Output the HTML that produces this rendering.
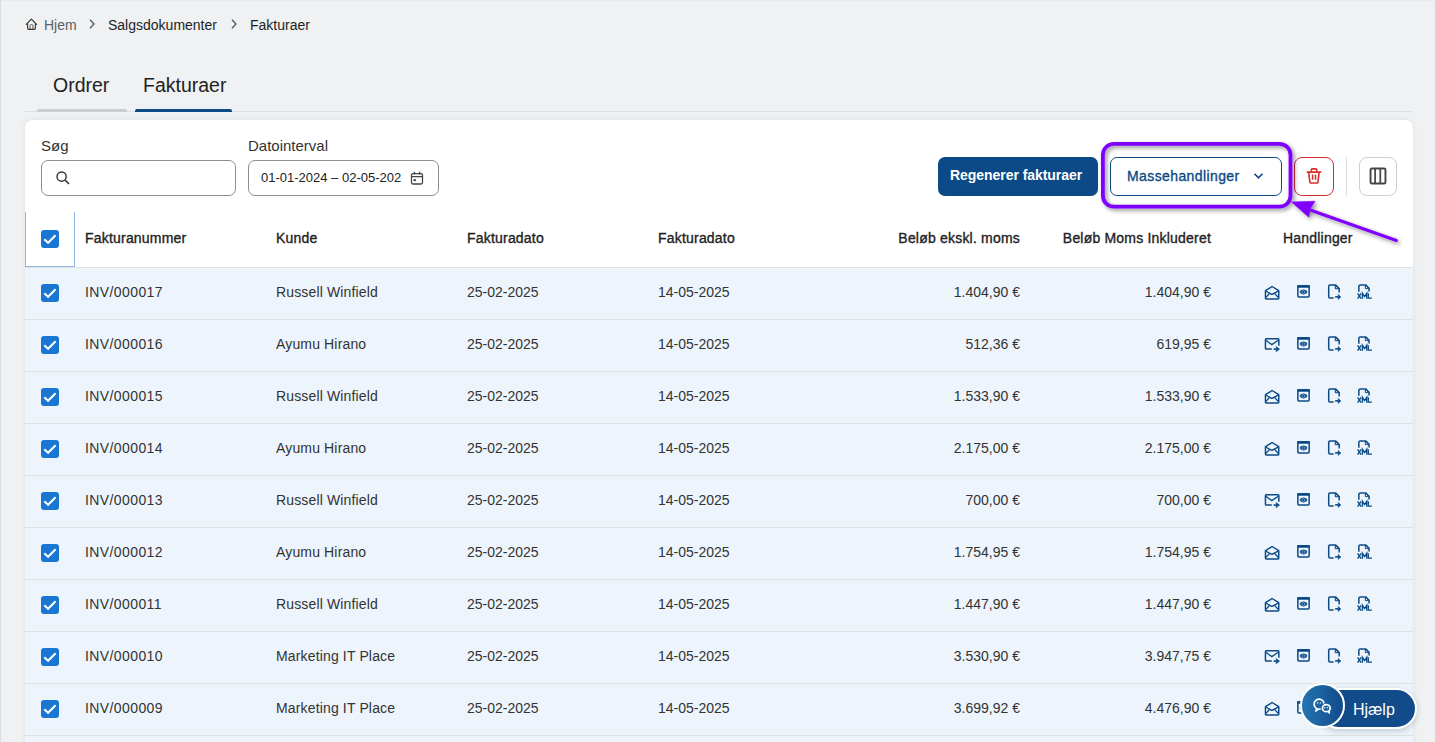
<!DOCTYPE html>
<html><head><meta charset="utf-8"><style>
*{box-sizing:border-box;margin:0;padding:0}
html,body{width:1435px;height:742px;overflow:hidden}
body{background:#f0f1f3;font-family:"Liberation Sans",sans-serif;color:#222;position:relative}
.a{position:absolute}
.t{position:absolute;font-size:14px;line-height:14px;white-space:nowrap;color:#333}
.r{text-align:right}
.h{position:absolute;font-size:14px;line-height:14px;white-space:nowrap;color:#222;-webkit-text-stroke:0.35px #222;letter-spacing:0.2px}
.b{font-weight:bold;-webkit-text-stroke:0}
.card{position:absolute;left:25px;top:120px;width:1388px;height:700px;background:#fff;border-radius:8px;box-shadow:0 0 6px rgba(0,0,0,0.07)}
.row{position:absolute;left:25px;width:1388px;height:52px;background:#edf4fc;border-bottom:1px solid #e0e0e0}
.cb{position:absolute;width:18px;height:18px;background:#1976d2;border-radius:3px}
.cb svg{position:absolute;left:0;top:0}
</style></head><body>
<div class="a" style="left:0;top:0;width:1435px;height:1px;background:#e9eaee"></div>
<div class="a" style="left:0;top:0;width:1px;height:742px;background:#d8dbdf"></div>
<!-- breadcrumb -->
<svg class="a" style="left:22px;top:14px" width="20" height="20" viewBox="0 0 20 20"><path d="M4.3 10.4 L9.4 5.1 L14.6 10.4" fill="none" stroke="#333" stroke-width="1.15" stroke-linecap="round" stroke-linejoin="round"/><path d="M5.6 9.3 V14.1 Q5.6 15.4 6.9 15.4 H12.1 Q13.4 15.4 13.4 14.1 V9.3" fill="none" stroke="#333" stroke-width="1.1"/><path d="M8.0 15.3 V11.8 Q8.0 10.5 9.5 10.5 Q11 10.5 11 11.8 V15.3" fill="none" stroke="#555" stroke-width="1.0"/></svg>
<div class="t" style="left:44px;top:18px;color:#5a5f66">Hjem</div>
<svg class="a" style="left:88px;top:18px" width="8" height="12" viewBox="0 0 8 12"><path d="M2 1.8 L6 6 L2 10.2" fill="none" stroke="#555" stroke-width="1.3"/></svg>
<div class="t" style="left:108px;top:18px;color:#1f1f1f">Salgsdokumenter</div>
<svg class="a" style="left:230px;top:18px" width="8" height="12" viewBox="0 0 8 12"><path d="M2 1.8 L6 6 L2 10.2" fill="none" stroke="#555" stroke-width="1.3"/></svg>
<div class="t" style="left:250px;top:18px;color:#1f1f1f">Fakturaer</div>
<!-- tabs -->
<div class="t" style="left:53px;top:75px;font-size:19.5px;line-height:20px;color:#222">Ordrer</div>
<div class="t" style="left:143px;top:75px;font-size:19.5px;line-height:20px;color:#222">Fakturaer</div>
<div class="a" style="left:25px;top:111px;width:1388px;height:1px;background:#dcdfe3"></div>
<div class="a" style="left:37px;top:109px;width:90px;height:3px;background:#c9ccd1;border-radius:2px 2px 0 0"></div>
<div class="a" style="left:135px;top:109px;width:97px;height:3px;background:#0b4a86;border-radius:2px 2px 0 0"></div>
<div class="card"></div>
<!-- filters -->
<div class="t" style="left:41px;top:138px;font-size:15px;line-height:15px;color:#333">Søg</div>
<div class="a" style="left:41px;top:160px;width:195px;height:36px;border:1px solid #8a8d91;border-radius:7px"></div>
<svg class="a" style="left:55px;top:170px" width="16" height="16" viewBox="0 0 16 16"><circle cx="6.6" cy="6.6" r="4.6" fill="none" stroke="#333" stroke-width="1.4"/><path d="M10 10 L14 14" stroke="#333" stroke-width="1.6"/></svg>
<div class="t" style="left:248px;top:138px;font-size:15px;line-height:15px;color:#333">Datointerval</div>
<div class="a" style="left:248px;top:160px;width:191px;height:36px;border:1px solid #8a8d91;border-radius:7px"></div>
<div class="t" style="left:261px;top:171px;font-size:13px;line-height:13px;color:#222">01-01-2024 – 02-05-202</div>
<svg class="a" style="left:410px;top:171px" width="14" height="14" viewBox="0 0 14 14"><rect x="1.5" y="2.6" width="11" height="10.4" rx="1.5" fill="none" stroke="#444" stroke-width="1.3"/><path d="M1.5 5.6 H12.5 M4.4 0.8 V3.6 M9.6 0.8 V3.6" stroke="#444" stroke-width="1.3"/><rect x="3.6" y="8" width="2.2" height="2.2" fill="#444"/></svg>
<!-- buttons -->
<div class="a" style="left:938px;top:157px;width:160px;height:39px;background:#0b4a86;border-radius:7px"></div>
<div class="h b" style="left:950px;top:168px;color:#fff;letter-spacing:-0.05px">Regenerer fakturaer</div>
<div class="a" style="left:1110px;top:157px;width:172px;height:39px;border:1px solid #0b4a86;border-radius:7px;background:#fff"></div>
<div class="t" style="left:1127px;top:169px;color:#0b4a86;-webkit-text-stroke:0.35px #0b4a86;letter-spacing:0.4px">Massehandlinger</div>
<svg class="a" style="left:1252px;top:170px" width="13" height="12" viewBox="0 0 13 12"><path d="M2.5 3.8 L6.5 7.8 L10.5 3.8" fill="none" stroke="#0b4a86" stroke-width="1.6"/></svg>
<div class="a" style="left:1294px;top:157px;width:40px;height:39px;border:1px solid #d32f2f;border-radius:8px"></div>
<svg class="a" style="left:1306px;top:167px" width="16" height="18" viewBox="0 0 16 18"><path d="M1.4 5.1 H14.6" stroke="#d32f2f" stroke-width="1.7" stroke-linecap="round"/><path d="M5.3 4.6 V2.8 Q5.3 1.9 6.2 1.9 H9.9 Q10.8 1.9 10.8 2.8 V4.6" fill="none" stroke="#d32f2f" stroke-width="1.6"/><path d="M2.7 5.6 L3.9 15.4 Q4 16.0 4.6 16.0 H11.2 Q11.8 16.0 11.9 15.4 L13.1 5.6" fill="none" stroke="#d32f2f" stroke-width="1.6" stroke-linejoin="round"/><path d="M6.6 7.6 V12.8 M9.5 7.6 V12.8" stroke="#d32f2f" stroke-width="1.5"/></svg>
<div class="a" style="left:1346px;top:157px;width:1px;height:39px;background:#dddddd"></div>
<div class="a" style="left:1359px;top:157px;width:38px;height:39px;border:1px solid #cfcfcf;border-radius:8px"></div>
<svg class="a" style="left:1369px;top:167px" width="18" height="18" viewBox="0 0 18 18"><rect x="1.55" y="1.55" width="14.9" height="14.9" rx="1.3" fill="none" stroke="#444" stroke-width="1.9"/><path d="M6.1 1.5 V16.5 M11.3 1.5 V16.5" stroke="#444" stroke-width="1.7"/></svg>
<!-- table header -->
<div class="a" style="left:25px;top:267px;width:1388px;height:1px;background:#e0e0e0"></div>
<div class="a" style="left:25px;top:212px;width:50px;height:55px;border:1px solid #90b8e8;border-top:none"></div>
<div class="cb" style="left:41px;top:230px"><svg width="18" height="18" viewBox="0 0 18 18"><path d="M3.3 9.3 L7.1 12.8 L14.6 5.3" fill="none" stroke="#fff" stroke-width="2.1"/></svg></div>
<div class="h" style="left:85px;top:231px">Fakturanummer</div>
<div class="h" style="left:276px;top:231px">Kunde</div>
<div class="h" style="left:467px;top:231px">Fakturadato</div>
<div class="h" style="left:658px;top:231px">Fakturadato</div>
<div class="h r" style="right:415px;top:231px">Beløb ekskl. moms</div>
<div class="h r" style="right:224px;top:231px">Beløb Moms Inkluderet</div>
<div class="h" style="left:1283px;top:231px">Handlinger</div>
<div class="row" style="top:268px"></div><div class="cb" style="left:41px;top:284px"><svg width="18" height="18" viewBox="0 0 18 18"><path d="M3.3 9.3 L7.1 12.8 L14.6 5.3" fill="none" stroke="#fff" stroke-width="2.1"/></svg></div><div class="t" style="left:85px;top:285px;letter-spacing:0.4px">INV/000017</div><div class="t" style="left:276px;top:285px;letter-spacing:0.15px">Russell Winfield</div><div class="t" style="left:467px;top:285px">25-02-2025</div><div class="t" style="left:658px;top:285px">14-05-2025</div><div class="t r" style="right:415px;top:285px">1.404,90 €</div><div class="t r" style="right:224px;top:285px">1.404,90 €</div><svg width="16" height="16" viewBox="0 0 16 16" style="position:absolute;left:1264px;top:284px"><path d="M1.45 6.6 L8.05 2.5 L14.75 6.6 V14.3 Q14.75 14.95 14.1 14.95 H2.1 Q1.45 14.95 1.45 14.3 Z" fill="none" stroke="#0b4a86" stroke-width="1.45" stroke-linejoin="round"/><path d="M2 7.2 L7.9 10.4 L14.2 7.2 M2.1 13.2 L5.4 9.6 M14.1 13.2 L10.8 9.6" fill="none" stroke="#0b4a86" stroke-width="1.3"/></svg><svg width="16" height="16" viewBox="0 0 16 16" style="position:absolute;left:1296px;top:284px"><rect x="1.85" y="1.75" width="11.3" height="11.3" rx="1.2" fill="none" stroke="#0b4a86" stroke-width="1.5"/><rect x="1.2" y="1.0" width="12.6" height="2.7" rx="0.8" fill="#0b4a86"/><path d="M3.7 8 C4.9 4.8 10.1 4.8 11.3 8 C10.1 11.2 4.9 11.2 3.7 8 Z" fill="#0b4a86"/><circle cx="7.45" cy="8.05" r="1.5" fill="none" stroke="#8fb0d2" stroke-width="0.8"/></svg><svg width="16" height="16" viewBox="0 0 16 16" style="position:absolute;left:1327px;top:284px"><path d="M6.6 14.05 H3.1 Q1.7 14.05 1.7 12.6 V2.3 Q1.7 0.9 3.1 0.9 H8.5 L12.2 4.5 V8.6" fill="none" stroke="#0b4a86" stroke-width="1.5" stroke-linejoin="round"/><path d="M8.2 1.3 V4.8 H11.9 Z" fill="#0b4a86" stroke="#0b4a86" stroke-width="0.8" stroke-linejoin="round"/><circle cx="9.4" cy="3.6" r="0.6" fill="#edf4fc"/><path d="M8.1 12.9 H12.2" fill="none" stroke="#0b4a86" stroke-width="1.6"/><path d="M11 10.4 L13.9 12.9 L11 15.4 L11.5 12.9 Z" fill="#0b4a86" stroke="#0b4a86" stroke-width="0.6" stroke-linejoin="round"/></svg><svg width="16" height="16" viewBox="0 0 16 16" style="position:absolute;left:1357px;top:284px"><path d="M1.85 7.7 V2.3 Q1.85 0.9 3.3 0.9 H8.6 L12.05 4.3 V7.5" fill="none" stroke="#0b4a86" stroke-width="1.5" stroke-linejoin="round"/><path d="M8.3 1.3 V4.6 H11.7 Z" fill="#0b4a86" stroke="#0b4a86" stroke-width="0.8" stroke-linejoin="round"/><circle cx="9.5" cy="3.4" r="0.6" fill="#edf4fc"/><path d="M0.6 9.3 L4.1 14.7 M4.1 9.3 L0.6 14.7" stroke="#0b4a86" stroke-width="1.35"/><path d="M5.4 14.8 V9.3 L7.6 12.6 L9.8 9.3 V14.8" fill="none" stroke="#0b4a86" stroke-width="1.35" stroke-linejoin="miter"/><path d="M11.3 9.2 V14.1 H14.9" fill="none" stroke="#0b4a86" stroke-width="1.35"/></svg><div class="row" style="top:320px"></div><div class="cb" style="left:41px;top:336px"><svg width="18" height="18" viewBox="0 0 18 18"><path d="M3.3 9.3 L7.1 12.8 L14.6 5.3" fill="none" stroke="#fff" stroke-width="2.1"/></svg></div><div class="t" style="left:85px;top:337px;letter-spacing:0.4px">INV/000016</div><div class="t" style="left:276px;top:337px;letter-spacing:0.15px">Ayumu Hirano</div><div class="t" style="left:467px;top:337px">25-02-2025</div><div class="t" style="left:658px;top:337px">14-05-2025</div><div class="t r" style="right:415px;top:337px">512,36 €</div><div class="t r" style="right:224px;top:337px">619,95 €</div><svg width="16" height="16" viewBox="0 0 16 16" style="position:absolute;left:1264px;top:336px"><path d="M7.8 13.05 H2.2 Q1.45 13.05 1.45 12.3 V3.55 Q1.45 2.8 2.2 2.8 H14.1 Q14.85 2.8 14.85 3.55 V9.8" fill="none" stroke="#0b4a86" stroke-width="1.5"/><path d="M1.9 4.3 L7.8 8.6 L14.3 4.3" fill="none" stroke="#0b4a86" stroke-width="1.3"/><path d="M9.6 13.1 H14" fill="none" stroke="#0b4a86" stroke-width="1.6"/><path d="M12 10.5 L15.6 13.1 L12 15.7 L12.6 13.1 Z" fill="#0b4a86" stroke="#0b4a86" stroke-width="0.6" stroke-linejoin="round"/></svg><svg width="16" height="16" viewBox="0 0 16 16" style="position:absolute;left:1296px;top:336px"><rect x="1.85" y="1.75" width="11.3" height="11.3" rx="1.2" fill="none" stroke="#0b4a86" stroke-width="1.5"/><rect x="1.2" y="1.0" width="12.6" height="2.7" rx="0.8" fill="#0b4a86"/><path d="M3.7 8 C4.9 4.8 10.1 4.8 11.3 8 C10.1 11.2 4.9 11.2 3.7 8 Z" fill="#0b4a86"/><circle cx="7.45" cy="8.05" r="1.5" fill="none" stroke="#8fb0d2" stroke-width="0.8"/></svg><svg width="16" height="16" viewBox="0 0 16 16" style="position:absolute;left:1327px;top:336px"><path d="M6.6 14.05 H3.1 Q1.7 14.05 1.7 12.6 V2.3 Q1.7 0.9 3.1 0.9 H8.5 L12.2 4.5 V8.6" fill="none" stroke="#0b4a86" stroke-width="1.5" stroke-linejoin="round"/><path d="M8.2 1.3 V4.8 H11.9 Z" fill="#0b4a86" stroke="#0b4a86" stroke-width="0.8" stroke-linejoin="round"/><circle cx="9.4" cy="3.6" r="0.6" fill="#edf4fc"/><path d="M8.1 12.9 H12.2" fill="none" stroke="#0b4a86" stroke-width="1.6"/><path d="M11 10.4 L13.9 12.9 L11 15.4 L11.5 12.9 Z" fill="#0b4a86" stroke="#0b4a86" stroke-width="0.6" stroke-linejoin="round"/></svg><svg width="16" height="16" viewBox="0 0 16 16" style="position:absolute;left:1357px;top:336px"><path d="M1.85 7.7 V2.3 Q1.85 0.9 3.3 0.9 H8.6 L12.05 4.3 V7.5" fill="none" stroke="#0b4a86" stroke-width="1.5" stroke-linejoin="round"/><path d="M8.3 1.3 V4.6 H11.7 Z" fill="#0b4a86" stroke="#0b4a86" stroke-width="0.8" stroke-linejoin="round"/><circle cx="9.5" cy="3.4" r="0.6" fill="#edf4fc"/><path d="M0.6 9.3 L4.1 14.7 M4.1 9.3 L0.6 14.7" stroke="#0b4a86" stroke-width="1.35"/><path d="M5.4 14.8 V9.3 L7.6 12.6 L9.8 9.3 V14.8" fill="none" stroke="#0b4a86" stroke-width="1.35" stroke-linejoin="miter"/><path d="M11.3 9.2 V14.1 H14.9" fill="none" stroke="#0b4a86" stroke-width="1.35"/></svg><div class="row" style="top:372px"></div><div class="cb" style="left:41px;top:388px"><svg width="18" height="18" viewBox="0 0 18 18"><path d="M3.3 9.3 L7.1 12.8 L14.6 5.3" fill="none" stroke="#fff" stroke-width="2.1"/></svg></div><div class="t" style="left:85px;top:389px;letter-spacing:0.4px">INV/000015</div><div class="t" style="left:276px;top:389px;letter-spacing:0.15px">Russell Winfield</div><div class="t" style="left:467px;top:389px">25-02-2025</div><div class="t" style="left:658px;top:389px">14-05-2025</div><div class="t r" style="right:415px;top:389px">1.533,90 €</div><div class="t r" style="right:224px;top:389px">1.533,90 €</div><svg width="16" height="16" viewBox="0 0 16 16" style="position:absolute;left:1264px;top:388px"><path d="M1.45 6.6 L8.05 2.5 L14.75 6.6 V14.3 Q14.75 14.95 14.1 14.95 H2.1 Q1.45 14.95 1.45 14.3 Z" fill="none" stroke="#0b4a86" stroke-width="1.45" stroke-linejoin="round"/><path d="M2 7.2 L7.9 10.4 L14.2 7.2 M2.1 13.2 L5.4 9.6 M14.1 13.2 L10.8 9.6" fill="none" stroke="#0b4a86" stroke-width="1.3"/></svg><svg width="16" height="16" viewBox="0 0 16 16" style="position:absolute;left:1296px;top:388px"><rect x="1.85" y="1.75" width="11.3" height="11.3" rx="1.2" fill="none" stroke="#0b4a86" stroke-width="1.5"/><rect x="1.2" y="1.0" width="12.6" height="2.7" rx="0.8" fill="#0b4a86"/><path d="M3.7 8 C4.9 4.8 10.1 4.8 11.3 8 C10.1 11.2 4.9 11.2 3.7 8 Z" fill="#0b4a86"/><circle cx="7.45" cy="8.05" r="1.5" fill="none" stroke="#8fb0d2" stroke-width="0.8"/></svg><svg width="16" height="16" viewBox="0 0 16 16" style="position:absolute;left:1327px;top:388px"><path d="M6.6 14.05 H3.1 Q1.7 14.05 1.7 12.6 V2.3 Q1.7 0.9 3.1 0.9 H8.5 L12.2 4.5 V8.6" fill="none" stroke="#0b4a86" stroke-width="1.5" stroke-linejoin="round"/><path d="M8.2 1.3 V4.8 H11.9 Z" fill="#0b4a86" stroke="#0b4a86" stroke-width="0.8" stroke-linejoin="round"/><circle cx="9.4" cy="3.6" r="0.6" fill="#edf4fc"/><path d="M8.1 12.9 H12.2" fill="none" stroke="#0b4a86" stroke-width="1.6"/><path d="M11 10.4 L13.9 12.9 L11 15.4 L11.5 12.9 Z" fill="#0b4a86" stroke="#0b4a86" stroke-width="0.6" stroke-linejoin="round"/></svg><svg width="16" height="16" viewBox="0 0 16 16" style="position:absolute;left:1357px;top:388px"><path d="M1.85 7.7 V2.3 Q1.85 0.9 3.3 0.9 H8.6 L12.05 4.3 V7.5" fill="none" stroke="#0b4a86" stroke-width="1.5" stroke-linejoin="round"/><path d="M8.3 1.3 V4.6 H11.7 Z" fill="#0b4a86" stroke="#0b4a86" stroke-width="0.8" stroke-linejoin="round"/><circle cx="9.5" cy="3.4" r="0.6" fill="#edf4fc"/><path d="M0.6 9.3 L4.1 14.7 M4.1 9.3 L0.6 14.7" stroke="#0b4a86" stroke-width="1.35"/><path d="M5.4 14.8 V9.3 L7.6 12.6 L9.8 9.3 V14.8" fill="none" stroke="#0b4a86" stroke-width="1.35" stroke-linejoin="miter"/><path d="M11.3 9.2 V14.1 H14.9" fill="none" stroke="#0b4a86" stroke-width="1.35"/></svg><div class="row" style="top:424px"></div><div class="cb" style="left:41px;top:440px"><svg width="18" height="18" viewBox="0 0 18 18"><path d="M3.3 9.3 L7.1 12.8 L14.6 5.3" fill="none" stroke="#fff" stroke-width="2.1"/></svg></div><div class="t" style="left:85px;top:441px;letter-spacing:0.4px">INV/000014</div><div class="t" style="left:276px;top:441px;letter-spacing:0.15px">Ayumu Hirano</div><div class="t" style="left:467px;top:441px">25-02-2025</div><div class="t" style="left:658px;top:441px">14-05-2025</div><div class="t r" style="right:415px;top:441px">2.175,00 €</div><div class="t r" style="right:224px;top:441px">2.175,00 €</div><svg width="16" height="16" viewBox="0 0 16 16" style="position:absolute;left:1264px;top:440px"><path d="M1.45 6.6 L8.05 2.5 L14.75 6.6 V14.3 Q14.75 14.95 14.1 14.95 H2.1 Q1.45 14.95 1.45 14.3 Z" fill="none" stroke="#0b4a86" stroke-width="1.45" stroke-linejoin="round"/><path d="M2 7.2 L7.9 10.4 L14.2 7.2 M2.1 13.2 L5.4 9.6 M14.1 13.2 L10.8 9.6" fill="none" stroke="#0b4a86" stroke-width="1.3"/></svg><svg width="16" height="16" viewBox="0 0 16 16" style="position:absolute;left:1296px;top:440px"><rect x="1.85" y="1.75" width="11.3" height="11.3" rx="1.2" fill="none" stroke="#0b4a86" stroke-width="1.5"/><rect x="1.2" y="1.0" width="12.6" height="2.7" rx="0.8" fill="#0b4a86"/><path d="M3.7 8 C4.9 4.8 10.1 4.8 11.3 8 C10.1 11.2 4.9 11.2 3.7 8 Z" fill="#0b4a86"/><circle cx="7.45" cy="8.05" r="1.5" fill="none" stroke="#8fb0d2" stroke-width="0.8"/></svg><svg width="16" height="16" viewBox="0 0 16 16" style="position:absolute;left:1327px;top:440px"><path d="M6.6 14.05 H3.1 Q1.7 14.05 1.7 12.6 V2.3 Q1.7 0.9 3.1 0.9 H8.5 L12.2 4.5 V8.6" fill="none" stroke="#0b4a86" stroke-width="1.5" stroke-linejoin="round"/><path d="M8.2 1.3 V4.8 H11.9 Z" fill="#0b4a86" stroke="#0b4a86" stroke-width="0.8" stroke-linejoin="round"/><circle cx="9.4" cy="3.6" r="0.6" fill="#edf4fc"/><path d="M8.1 12.9 H12.2" fill="none" stroke="#0b4a86" stroke-width="1.6"/><path d="M11 10.4 L13.9 12.9 L11 15.4 L11.5 12.9 Z" fill="#0b4a86" stroke="#0b4a86" stroke-width="0.6" stroke-linejoin="round"/></svg><svg width="16" height="16" viewBox="0 0 16 16" style="position:absolute;left:1357px;top:440px"><path d="M1.85 7.7 V2.3 Q1.85 0.9 3.3 0.9 H8.6 L12.05 4.3 V7.5" fill="none" stroke="#0b4a86" stroke-width="1.5" stroke-linejoin="round"/><path d="M8.3 1.3 V4.6 H11.7 Z" fill="#0b4a86" stroke="#0b4a86" stroke-width="0.8" stroke-linejoin="round"/><circle cx="9.5" cy="3.4" r="0.6" fill="#edf4fc"/><path d="M0.6 9.3 L4.1 14.7 M4.1 9.3 L0.6 14.7" stroke="#0b4a86" stroke-width="1.35"/><path d="M5.4 14.8 V9.3 L7.6 12.6 L9.8 9.3 V14.8" fill="none" stroke="#0b4a86" stroke-width="1.35" stroke-linejoin="miter"/><path d="M11.3 9.2 V14.1 H14.9" fill="none" stroke="#0b4a86" stroke-width="1.35"/></svg><div class="row" style="top:476px"></div><div class="cb" style="left:41px;top:492px"><svg width="18" height="18" viewBox="0 0 18 18"><path d="M3.3 9.3 L7.1 12.8 L14.6 5.3" fill="none" stroke="#fff" stroke-width="2.1"/></svg></div><div class="t" style="left:85px;top:493px;letter-spacing:0.4px">INV/000013</div><div class="t" style="left:276px;top:493px;letter-spacing:0.15px">Russell Winfield</div><div class="t" style="left:467px;top:493px">25-02-2025</div><div class="t" style="left:658px;top:493px">14-05-2025</div><div class="t r" style="right:415px;top:493px">700,00 €</div><div class="t r" style="right:224px;top:493px">700,00 €</div><svg width="16" height="16" viewBox="0 0 16 16" style="position:absolute;left:1264px;top:492px"><path d="M7.8 13.05 H2.2 Q1.45 13.05 1.45 12.3 V3.55 Q1.45 2.8 2.2 2.8 H14.1 Q14.85 2.8 14.85 3.55 V9.8" fill="none" stroke="#0b4a86" stroke-width="1.5"/><path d="M1.9 4.3 L7.8 8.6 L14.3 4.3" fill="none" stroke="#0b4a86" stroke-width="1.3"/><path d="M9.6 13.1 H14" fill="none" stroke="#0b4a86" stroke-width="1.6"/><path d="M12 10.5 L15.6 13.1 L12 15.7 L12.6 13.1 Z" fill="#0b4a86" stroke="#0b4a86" stroke-width="0.6" stroke-linejoin="round"/></svg><svg width="16" height="16" viewBox="0 0 16 16" style="position:absolute;left:1296px;top:492px"><rect x="1.85" y="1.75" width="11.3" height="11.3" rx="1.2" fill="none" stroke="#0b4a86" stroke-width="1.5"/><rect x="1.2" y="1.0" width="12.6" height="2.7" rx="0.8" fill="#0b4a86"/><path d="M3.7 8 C4.9 4.8 10.1 4.8 11.3 8 C10.1 11.2 4.9 11.2 3.7 8 Z" fill="#0b4a86"/><circle cx="7.45" cy="8.05" r="1.5" fill="none" stroke="#8fb0d2" stroke-width="0.8"/></svg><svg width="16" height="16" viewBox="0 0 16 16" style="position:absolute;left:1327px;top:492px"><path d="M6.6 14.05 H3.1 Q1.7 14.05 1.7 12.6 V2.3 Q1.7 0.9 3.1 0.9 H8.5 L12.2 4.5 V8.6" fill="none" stroke="#0b4a86" stroke-width="1.5" stroke-linejoin="round"/><path d="M8.2 1.3 V4.8 H11.9 Z" fill="#0b4a86" stroke="#0b4a86" stroke-width="0.8" stroke-linejoin="round"/><circle cx="9.4" cy="3.6" r="0.6" fill="#edf4fc"/><path d="M8.1 12.9 H12.2" fill="none" stroke="#0b4a86" stroke-width="1.6"/><path d="M11 10.4 L13.9 12.9 L11 15.4 L11.5 12.9 Z" fill="#0b4a86" stroke="#0b4a86" stroke-width="0.6" stroke-linejoin="round"/></svg><svg width="16" height="16" viewBox="0 0 16 16" style="position:absolute;left:1357px;top:492px"><path d="M1.85 7.7 V2.3 Q1.85 0.9 3.3 0.9 H8.6 L12.05 4.3 V7.5" fill="none" stroke="#0b4a86" stroke-width="1.5" stroke-linejoin="round"/><path d="M8.3 1.3 V4.6 H11.7 Z" fill="#0b4a86" stroke="#0b4a86" stroke-width="0.8" stroke-linejoin="round"/><circle cx="9.5" cy="3.4" r="0.6" fill="#edf4fc"/><path d="M0.6 9.3 L4.1 14.7 M4.1 9.3 L0.6 14.7" stroke="#0b4a86" stroke-width="1.35"/><path d="M5.4 14.8 V9.3 L7.6 12.6 L9.8 9.3 V14.8" fill="none" stroke="#0b4a86" stroke-width="1.35" stroke-linejoin="miter"/><path d="M11.3 9.2 V14.1 H14.9" fill="none" stroke="#0b4a86" stroke-width="1.35"/></svg><div class="row" style="top:528px"></div><div class="cb" style="left:41px;top:544px"><svg width="18" height="18" viewBox="0 0 18 18"><path d="M3.3 9.3 L7.1 12.8 L14.6 5.3" fill="none" stroke="#fff" stroke-width="2.1"/></svg></div><div class="t" style="left:85px;top:545px;letter-spacing:0.4px">INV/000012</div><div class="t" style="left:276px;top:545px;letter-spacing:0.15px">Ayumu Hirano</div><div class="t" style="left:467px;top:545px">25-02-2025</div><div class="t" style="left:658px;top:545px">14-05-2025</div><div class="t r" style="right:415px;top:545px">1.754,95 €</div><div class="t r" style="right:224px;top:545px">1.754,95 €</div><svg width="16" height="16" viewBox="0 0 16 16" style="position:absolute;left:1264px;top:544px"><path d="M1.45 6.6 L8.05 2.5 L14.75 6.6 V14.3 Q14.75 14.95 14.1 14.95 H2.1 Q1.45 14.95 1.45 14.3 Z" fill="none" stroke="#0b4a86" stroke-width="1.45" stroke-linejoin="round"/><path d="M2 7.2 L7.9 10.4 L14.2 7.2 M2.1 13.2 L5.4 9.6 M14.1 13.2 L10.8 9.6" fill="none" stroke="#0b4a86" stroke-width="1.3"/></svg><svg width="16" height="16" viewBox="0 0 16 16" style="position:absolute;left:1296px;top:544px"><rect x="1.85" y="1.75" width="11.3" height="11.3" rx="1.2" fill="none" stroke="#0b4a86" stroke-width="1.5"/><rect x="1.2" y="1.0" width="12.6" height="2.7" rx="0.8" fill="#0b4a86"/><path d="M3.7 8 C4.9 4.8 10.1 4.8 11.3 8 C10.1 11.2 4.9 11.2 3.7 8 Z" fill="#0b4a86"/><circle cx="7.45" cy="8.05" r="1.5" fill="none" stroke="#8fb0d2" stroke-width="0.8"/></svg><svg width="16" height="16" viewBox="0 0 16 16" style="position:absolute;left:1327px;top:544px"><path d="M6.6 14.05 H3.1 Q1.7 14.05 1.7 12.6 V2.3 Q1.7 0.9 3.1 0.9 H8.5 L12.2 4.5 V8.6" fill="none" stroke="#0b4a86" stroke-width="1.5" stroke-linejoin="round"/><path d="M8.2 1.3 V4.8 H11.9 Z" fill="#0b4a86" stroke="#0b4a86" stroke-width="0.8" stroke-linejoin="round"/><circle cx="9.4" cy="3.6" r="0.6" fill="#edf4fc"/><path d="M8.1 12.9 H12.2" fill="none" stroke="#0b4a86" stroke-width="1.6"/><path d="M11 10.4 L13.9 12.9 L11 15.4 L11.5 12.9 Z" fill="#0b4a86" stroke="#0b4a86" stroke-width="0.6" stroke-linejoin="round"/></svg><svg width="16" height="16" viewBox="0 0 16 16" style="position:absolute;left:1357px;top:544px"><path d="M1.85 7.7 V2.3 Q1.85 0.9 3.3 0.9 H8.6 L12.05 4.3 V7.5" fill="none" stroke="#0b4a86" stroke-width="1.5" stroke-linejoin="round"/><path d="M8.3 1.3 V4.6 H11.7 Z" fill="#0b4a86" stroke="#0b4a86" stroke-width="0.8" stroke-linejoin="round"/><circle cx="9.5" cy="3.4" r="0.6" fill="#edf4fc"/><path d="M0.6 9.3 L4.1 14.7 M4.1 9.3 L0.6 14.7" stroke="#0b4a86" stroke-width="1.35"/><path d="M5.4 14.8 V9.3 L7.6 12.6 L9.8 9.3 V14.8" fill="none" stroke="#0b4a86" stroke-width="1.35" stroke-linejoin="miter"/><path d="M11.3 9.2 V14.1 H14.9" fill="none" stroke="#0b4a86" stroke-width="1.35"/></svg><div class="row" style="top:580px"></div><div class="cb" style="left:41px;top:596px"><svg width="18" height="18" viewBox="0 0 18 18"><path d="M3.3 9.3 L7.1 12.8 L14.6 5.3" fill="none" stroke="#fff" stroke-width="2.1"/></svg></div><div class="t" style="left:85px;top:597px;letter-spacing:0.4px">INV/000011</div><div class="t" style="left:276px;top:597px;letter-spacing:0.15px">Russell Winfield</div><div class="t" style="left:467px;top:597px">25-02-2025</div><div class="t" style="left:658px;top:597px">14-05-2025</div><div class="t r" style="right:415px;top:597px">1.447,90 €</div><div class="t r" style="right:224px;top:597px">1.447,90 €</div><svg width="16" height="16" viewBox="0 0 16 16" style="position:absolute;left:1264px;top:596px"><path d="M1.45 6.6 L8.05 2.5 L14.75 6.6 V14.3 Q14.75 14.95 14.1 14.95 H2.1 Q1.45 14.95 1.45 14.3 Z" fill="none" stroke="#0b4a86" stroke-width="1.45" stroke-linejoin="round"/><path d="M2 7.2 L7.9 10.4 L14.2 7.2 M2.1 13.2 L5.4 9.6 M14.1 13.2 L10.8 9.6" fill="none" stroke="#0b4a86" stroke-width="1.3"/></svg><svg width="16" height="16" viewBox="0 0 16 16" style="position:absolute;left:1296px;top:596px"><rect x="1.85" y="1.75" width="11.3" height="11.3" rx="1.2" fill="none" stroke="#0b4a86" stroke-width="1.5"/><rect x="1.2" y="1.0" width="12.6" height="2.7" rx="0.8" fill="#0b4a86"/><path d="M3.7 8 C4.9 4.8 10.1 4.8 11.3 8 C10.1 11.2 4.9 11.2 3.7 8 Z" fill="#0b4a86"/><circle cx="7.45" cy="8.05" r="1.5" fill="none" stroke="#8fb0d2" stroke-width="0.8"/></svg><svg width="16" height="16" viewBox="0 0 16 16" style="position:absolute;left:1327px;top:596px"><path d="M6.6 14.05 H3.1 Q1.7 14.05 1.7 12.6 V2.3 Q1.7 0.9 3.1 0.9 H8.5 L12.2 4.5 V8.6" fill="none" stroke="#0b4a86" stroke-width="1.5" stroke-linejoin="round"/><path d="M8.2 1.3 V4.8 H11.9 Z" fill="#0b4a86" stroke="#0b4a86" stroke-width="0.8" stroke-linejoin="round"/><circle cx="9.4" cy="3.6" r="0.6" fill="#edf4fc"/><path d="M8.1 12.9 H12.2" fill="none" stroke="#0b4a86" stroke-width="1.6"/><path d="M11 10.4 L13.9 12.9 L11 15.4 L11.5 12.9 Z" fill="#0b4a86" stroke="#0b4a86" stroke-width="0.6" stroke-linejoin="round"/></svg><svg width="16" height="16" viewBox="0 0 16 16" style="position:absolute;left:1357px;top:596px"><path d="M1.85 7.7 V2.3 Q1.85 0.9 3.3 0.9 H8.6 L12.05 4.3 V7.5" fill="none" stroke="#0b4a86" stroke-width="1.5" stroke-linejoin="round"/><path d="M8.3 1.3 V4.6 H11.7 Z" fill="#0b4a86" stroke="#0b4a86" stroke-width="0.8" stroke-linejoin="round"/><circle cx="9.5" cy="3.4" r="0.6" fill="#edf4fc"/><path d="M0.6 9.3 L4.1 14.7 M4.1 9.3 L0.6 14.7" stroke="#0b4a86" stroke-width="1.35"/><path d="M5.4 14.8 V9.3 L7.6 12.6 L9.8 9.3 V14.8" fill="none" stroke="#0b4a86" stroke-width="1.35" stroke-linejoin="miter"/><path d="M11.3 9.2 V14.1 H14.9" fill="none" stroke="#0b4a86" stroke-width="1.35"/></svg><div class="row" style="top:632px"></div><div class="cb" style="left:41px;top:648px"><svg width="18" height="18" viewBox="0 0 18 18"><path d="M3.3 9.3 L7.1 12.8 L14.6 5.3" fill="none" stroke="#fff" stroke-width="2.1"/></svg></div><div class="t" style="left:85px;top:649px;letter-spacing:0.4px">INV/000010</div><div class="t" style="left:276px;top:649px;letter-spacing:0.15px">Marketing IT Place</div><div class="t" style="left:467px;top:649px">25-02-2025</div><div class="t" style="left:658px;top:649px">14-05-2025</div><div class="t r" style="right:415px;top:649px">3.530,90 €</div><div class="t r" style="right:224px;top:649px">3.947,75 €</div><svg width="16" height="16" viewBox="0 0 16 16" style="position:absolute;left:1264px;top:648px"><path d="M7.8 13.05 H2.2 Q1.45 13.05 1.45 12.3 V3.55 Q1.45 2.8 2.2 2.8 H14.1 Q14.85 2.8 14.85 3.55 V9.8" fill="none" stroke="#0b4a86" stroke-width="1.5"/><path d="M1.9 4.3 L7.8 8.6 L14.3 4.3" fill="none" stroke="#0b4a86" stroke-width="1.3"/><path d="M9.6 13.1 H14" fill="none" stroke="#0b4a86" stroke-width="1.6"/><path d="M12 10.5 L15.6 13.1 L12 15.7 L12.6 13.1 Z" fill="#0b4a86" stroke="#0b4a86" stroke-width="0.6" stroke-linejoin="round"/></svg><svg width="16" height="16" viewBox="0 0 16 16" style="position:absolute;left:1296px;top:648px"><rect x="1.85" y="1.75" width="11.3" height="11.3" rx="1.2" fill="none" stroke="#0b4a86" stroke-width="1.5"/><rect x="1.2" y="1.0" width="12.6" height="2.7" rx="0.8" fill="#0b4a86"/><path d="M3.7 8 C4.9 4.8 10.1 4.8 11.3 8 C10.1 11.2 4.9 11.2 3.7 8 Z" fill="#0b4a86"/><circle cx="7.45" cy="8.05" r="1.5" fill="none" stroke="#8fb0d2" stroke-width="0.8"/></svg><svg width="16" height="16" viewBox="0 0 16 16" style="position:absolute;left:1327px;top:648px"><path d="M6.6 14.05 H3.1 Q1.7 14.05 1.7 12.6 V2.3 Q1.7 0.9 3.1 0.9 H8.5 L12.2 4.5 V8.6" fill="none" stroke="#0b4a86" stroke-width="1.5" stroke-linejoin="round"/><path d="M8.2 1.3 V4.8 H11.9 Z" fill="#0b4a86" stroke="#0b4a86" stroke-width="0.8" stroke-linejoin="round"/><circle cx="9.4" cy="3.6" r="0.6" fill="#edf4fc"/><path d="M8.1 12.9 H12.2" fill="none" stroke="#0b4a86" stroke-width="1.6"/><path d="M11 10.4 L13.9 12.9 L11 15.4 L11.5 12.9 Z" fill="#0b4a86" stroke="#0b4a86" stroke-width="0.6" stroke-linejoin="round"/></svg><svg width="16" height="16" viewBox="0 0 16 16" style="position:absolute;left:1357px;top:648px"><path d="M1.85 7.7 V2.3 Q1.85 0.9 3.3 0.9 H8.6 L12.05 4.3 V7.5" fill="none" stroke="#0b4a86" stroke-width="1.5" stroke-linejoin="round"/><path d="M8.3 1.3 V4.6 H11.7 Z" fill="#0b4a86" stroke="#0b4a86" stroke-width="0.8" stroke-linejoin="round"/><circle cx="9.5" cy="3.4" r="0.6" fill="#edf4fc"/><path d="M0.6 9.3 L4.1 14.7 M4.1 9.3 L0.6 14.7" stroke="#0b4a86" stroke-width="1.35"/><path d="M5.4 14.8 V9.3 L7.6 12.6 L9.8 9.3 V14.8" fill="none" stroke="#0b4a86" stroke-width="1.35" stroke-linejoin="miter"/><path d="M11.3 9.2 V14.1 H14.9" fill="none" stroke="#0b4a86" stroke-width="1.35"/></svg><div class="row" style="top:684px"></div><div class="cb" style="left:41px;top:700px"><svg width="18" height="18" viewBox="0 0 18 18"><path d="M3.3 9.3 L7.1 12.8 L14.6 5.3" fill="none" stroke="#fff" stroke-width="2.1"/></svg></div><div class="t" style="left:85px;top:701px;letter-spacing:0.4px">INV/000009</div><div class="t" style="left:276px;top:701px;letter-spacing:0.15px">Marketing IT Place</div><div class="t" style="left:467px;top:701px">25-02-2025</div><div class="t" style="left:658px;top:701px">14-05-2025</div><div class="t r" style="right:415px;top:701px">3.699,92 €</div><div class="t r" style="right:224px;top:701px">4.476,90 €</div><svg width="16" height="16" viewBox="0 0 16 16" style="position:absolute;left:1264px;top:700px"><path d="M1.45 6.6 L8.05 2.5 L14.75 6.6 V14.3 Q14.75 14.95 14.1 14.95 H2.1 Q1.45 14.95 1.45 14.3 Z" fill="none" stroke="#0b4a86" stroke-width="1.45" stroke-linejoin="round"/><path d="M2 7.2 L7.9 10.4 L14.2 7.2 M2.1 13.2 L5.4 9.6 M14.1 13.2 L10.8 9.6" fill="none" stroke="#0b4a86" stroke-width="1.3"/></svg><svg width="16" height="16" viewBox="0 0 16 16" style="position:absolute;left:1296px;top:700px"><rect x="1.85" y="1.75" width="11.3" height="11.3" rx="1.2" fill="none" stroke="#0b4a86" stroke-width="1.5"/><rect x="1.2" y="1.0" width="12.6" height="2.7" rx="0.8" fill="#0b4a86"/><path d="M3.7 8 C4.9 4.8 10.1 4.8 11.3 8 C10.1 11.2 4.9 11.2 3.7 8 Z" fill="#0b4a86"/><circle cx="7.45" cy="8.05" r="1.5" fill="none" stroke="#8fb0d2" stroke-width="0.8"/></svg><svg width="16" height="16" viewBox="0 0 16 16" style="position:absolute;left:1327px;top:700px"><path d="M6.6 14.05 H3.1 Q1.7 14.05 1.7 12.6 V2.3 Q1.7 0.9 3.1 0.9 H8.5 L12.2 4.5 V8.6" fill="none" stroke="#0b4a86" stroke-width="1.5" stroke-linejoin="round"/><path d="M8.2 1.3 V4.8 H11.9 Z" fill="#0b4a86" stroke="#0b4a86" stroke-width="0.8" stroke-linejoin="round"/><circle cx="9.4" cy="3.6" r="0.6" fill="#edf4fc"/><path d="M8.1 12.9 H12.2" fill="none" stroke="#0b4a86" stroke-width="1.6"/><path d="M11 10.4 L13.9 12.9 L11 15.4 L11.5 12.9 Z" fill="#0b4a86" stroke="#0b4a86" stroke-width="0.6" stroke-linejoin="round"/></svg><svg width="16" height="16" viewBox="0 0 16 16" style="position:absolute;left:1357px;top:700px"><path d="M1.85 7.7 V2.3 Q1.85 0.9 3.3 0.9 H8.6 L12.05 4.3 V7.5" fill="none" stroke="#0b4a86" stroke-width="1.5" stroke-linejoin="round"/><path d="M8.3 1.3 V4.6 H11.7 Z" fill="#0b4a86" stroke="#0b4a86" stroke-width="0.8" stroke-linejoin="round"/><circle cx="9.5" cy="3.4" r="0.6" fill="#edf4fc"/><path d="M0.6 9.3 L4.1 14.7 M4.1 9.3 L0.6 14.7" stroke="#0b4a86" stroke-width="1.35"/><path d="M5.4 14.8 V9.3 L7.6 12.6 L9.8 9.3 V14.8" fill="none" stroke="#0b4a86" stroke-width="1.35" stroke-linejoin="miter"/><path d="M11.3 9.2 V14.1 H14.9" fill="none" stroke="#0b4a86" stroke-width="1.35"/></svg><div class="row" style="top:736px"></div>
<!-- annotation -->
<svg class="a" style="left:0;top:0;overflow:visible" width="1435" height="742">
<defs><filter id="sh" x="-20%" y="-20%" width="140%" height="140%"><feDropShadow dx="2" dy="2" stdDeviation="2" flood-color="#000" flood-opacity="0.45"/></filter></defs>
<g filter="url(#sh)">
<rect x="1102.9" y="143.8" width="187.6" height="62.9" rx="11" fill="none" stroke="#7f00ff" stroke-width="3.8"/>
<path d="M1396.4 240.5 L1306 208.5" stroke="#7f00ff" stroke-width="3" stroke-linecap="round"/>
<path d="M1291.5 202 L1315 201.3 L1309.8 209.2 L1309 217.2 Z" fill="#7f00ff" stroke="#7f00ff" stroke-width="0.6" stroke-linejoin="round"/>
</g>
</svg>
<!-- help button -->
<div class="a" style="left:1318px;top:688px;width:99px;height:41px;background:#124b8a;border:2px solid #fff;border-radius:21px;box-shadow:0 2px 6px rgba(0,0,0,0.18)"></div>
<div class="a" style="left:1299.5px;top:682.5px;width:45px;height:45px;border-radius:50%;border:2px solid #fff;background:linear-gradient(90deg,#2474b2,#124b8a)"></div>
<svg class="a" style="left:1310px;top:695px" width="24" height="22" viewBox="0 0 24 22"><path d="M6.2 14.0 L5.4 16.6 L8.8 14.6" fill="#fff" stroke="#fff" stroke-width="1" stroke-linejoin="round"/><circle cx="9.1" cy="9.2" r="5.0" fill="none" stroke="#fff" stroke-width="1.7"/><ellipse cx="16.3" cy="13.2" rx="4.0" ry="3.6" fill="#1b5e9d" stroke="#1b5e9d" stroke-width="3.4"/><path d="M17.6 16.4 L19.4 18.7 L19.2 15.8" fill="#fff" stroke="#fff" stroke-width="1" stroke-linejoin="round"/><ellipse cx="16.3" cy="13.2" rx="3.9" ry="3.5" fill="none" stroke="#fff" stroke-width="1.7"/><rect x="7.0" y="7.4" width="1.3" height="1.1" fill="#fff"/><rect x="9.8" y="7.4" width="1.3" height="1.1" fill="#fff"/><rect x="14.1" y="12.2" width="1.3" height="1.1" fill="#fff"/><rect x="16.8" y="12.2" width="1.3" height="1.1" fill="#fff"/></svg>
<div class="t" style="left:1353px;top:702px;font-size:16px;line-height:16px;color:#fff">Hjælp</div>
</body></html>
